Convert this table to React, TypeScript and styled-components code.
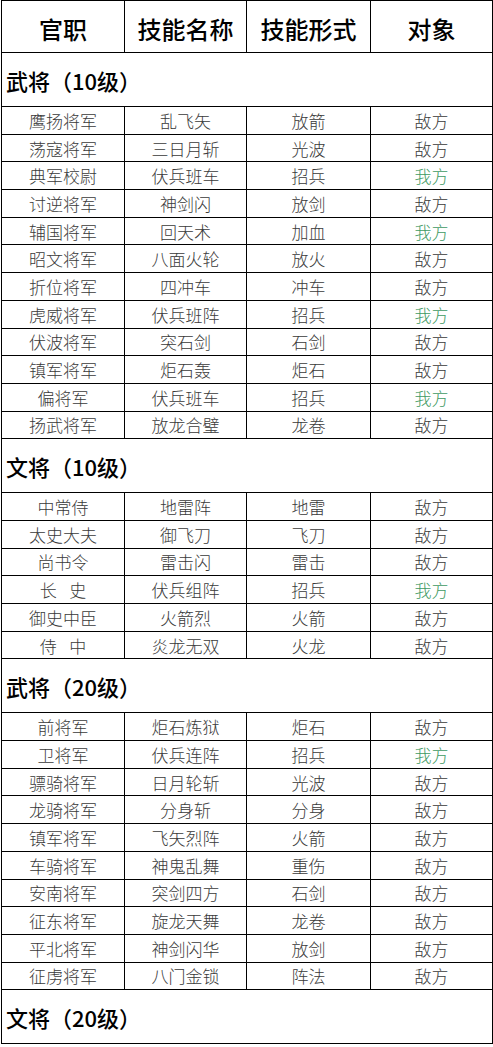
import React from "react";
import styled, { createGlobalStyle } from "styled-components";

const Global = createGlobalStyle`
  html, body { margin: 0; padding: 0; background: #ffffff; }
  body { font-family: "Noto Sans CJK SC", "Noto Sans", sans-serif; }
`;

const Table = styled.table`
  border-collapse: collapse;
  table-layout: fixed;
  width: 491px;
  margin-left: 1px;
`;

const HeadCell = styled.th`
  height: 47px;
  border: 1px solid #000;
  font-family: "Noto Sans CJK SC", sans-serif;
  font-weight: 500;
  font-size: 24px;
  color: #000;
  text-align: center;
  vertical-align: middle;
  padding: 4px 0 0 0;
  line-height: 1;
`;

const SectionCell = styled.td`
  height: 53px;
  border: 1px solid #000;
  font-family: "Noto Sans CJK SC", sans-serif;
  font-weight: 500;
  font-size: 22px;
  color: #000;
  text-align: left;
  vertical-align: middle;
  padding: 0 0 0 4px;
  line-height: 1;
`;

const Cell = styled.td<{ $ally?: boolean }>`
  height: 26.7px;
  border: 1px solid #000;
  font-family: "Noto Sans CJK SC", sans-serif;
  font-weight: 300;
  font-size: 17px;
  color: ${(p) => (p.$ally ? "#3f9a63" : "#3a3a3a")};
  text-align: center;
  vertical-align: middle;
  padding: 0;
  line-height: 1;
  white-space: pre;
`;

type Row = [string, string, string, string];

const sections: { title: string; rows: Row[] }[] = [
  {
    title: "武将（10级）",
    rows: [
      ["鹰扬将军", "乱飞矢", "放箭", "敌方"],
      ["荡寇将军", "三日月斩", "光波", "敌方"],
      ["典军校尉", "伏兵班车", "招兵", "我方"],
      ["讨逆将军", "神剑闪", "放剑", "敌方"],
      ["辅国将军", "回天术", "加血", "我方"],
      ["昭文将军", "八面火轮", "放火", "敌方"],
      ["折位将军", "四冲车", "冲车", "敌方"],
      ["虎威将军", "伏兵班阵", "招兵", "我方"],
      ["伏波将军", "突石剑", "石剑", "敌方"],
      ["镇军将军", "炬石轰", "炬石", "敌方"],
      ["偏将军", "伏兵班车", "招兵", "我方"],
      ["扬武将军", "放龙合璧", "龙卷", "敌方"],
    ],
  },
  {
    title: "文将（10级）",
    rows: [
      ["中常侍", "地雷阵", "地雷", "敌方"],
      ["太史大夫", "御飞刀", "飞刀", "敌方"],
      ["尚书令", "雷击闪", "雷击", "敌方"],
      ["长\u2002\u2005史", "伏兵组阵", "招兵", "我方"],
      ["御史中臣", "火箭烈", "火箭", "敌方"],
      ["侍\u2002\u2005中", "炎龙无双", "火龙", "敌方"],
    ],
  },
  {
    title: "武将（20级）",
    rows: [
      ["前将军", "炬石炼狱", "炬石", "敌方"],
      ["卫将军", "伏兵连阵", "招兵", "我方"],
      ["骠骑将军", "日月轮斩", "光波", "敌方"],
      ["龙骑将军", "分身斩", "分身", "敌方"],
      ["镇军将军", "飞矢烈阵", "火箭", "敌方"],
      ["车骑将军", "神鬼乱舞", "重伤", "敌方"],
      ["安南将军", "突剑四方", "石剑", "敌方"],
      ["征东将军", "旋龙天舞", "龙卷", "敌方"],
      ["平北将军", "神剑闪华", "放剑", "敌方"],
      ["征虏将军", "八门金锁", "阵法", "敌方"],
    ],
  },
  { title: "文将（20级）", rows: [] },
];

export default function App() {
  return (
    <>
      <Global />
      <Table>
        <colgroup>
          <col style={{ width: 123 }} />
          <col style={{ width: 122 }} />
          <col style={{ width: 124 }} />
          <col style={{ width: 122 }} />
        </colgroup>
        <thead>
          <tr>
            <HeadCell>官职</HeadCell>
            <HeadCell>技能名称</HeadCell>
            <HeadCell>技能形式</HeadCell>
            <HeadCell>对象</HeadCell>
          </tr>
        </thead>
        <tbody>
          {sections.map((s) => (
            <React.Fragment key={s.title}>
              <tr>
                <SectionCell colSpan={4}>{s.title}</SectionCell>
              </tr>
              {s.rows.map((r, i) => (
                <tr key={i}>
                  <Cell>{r[0]}</Cell>
                  <Cell>{r[1]}</Cell>
                  <Cell>{r[2]}</Cell>
                  <Cell $ally={r[3] === "我方"}>{r[3]}</Cell>
                </tr>
              ))}
            </React.Fragment>
          ))}
        </tbody>
      </Table>
    </>
  );
}
